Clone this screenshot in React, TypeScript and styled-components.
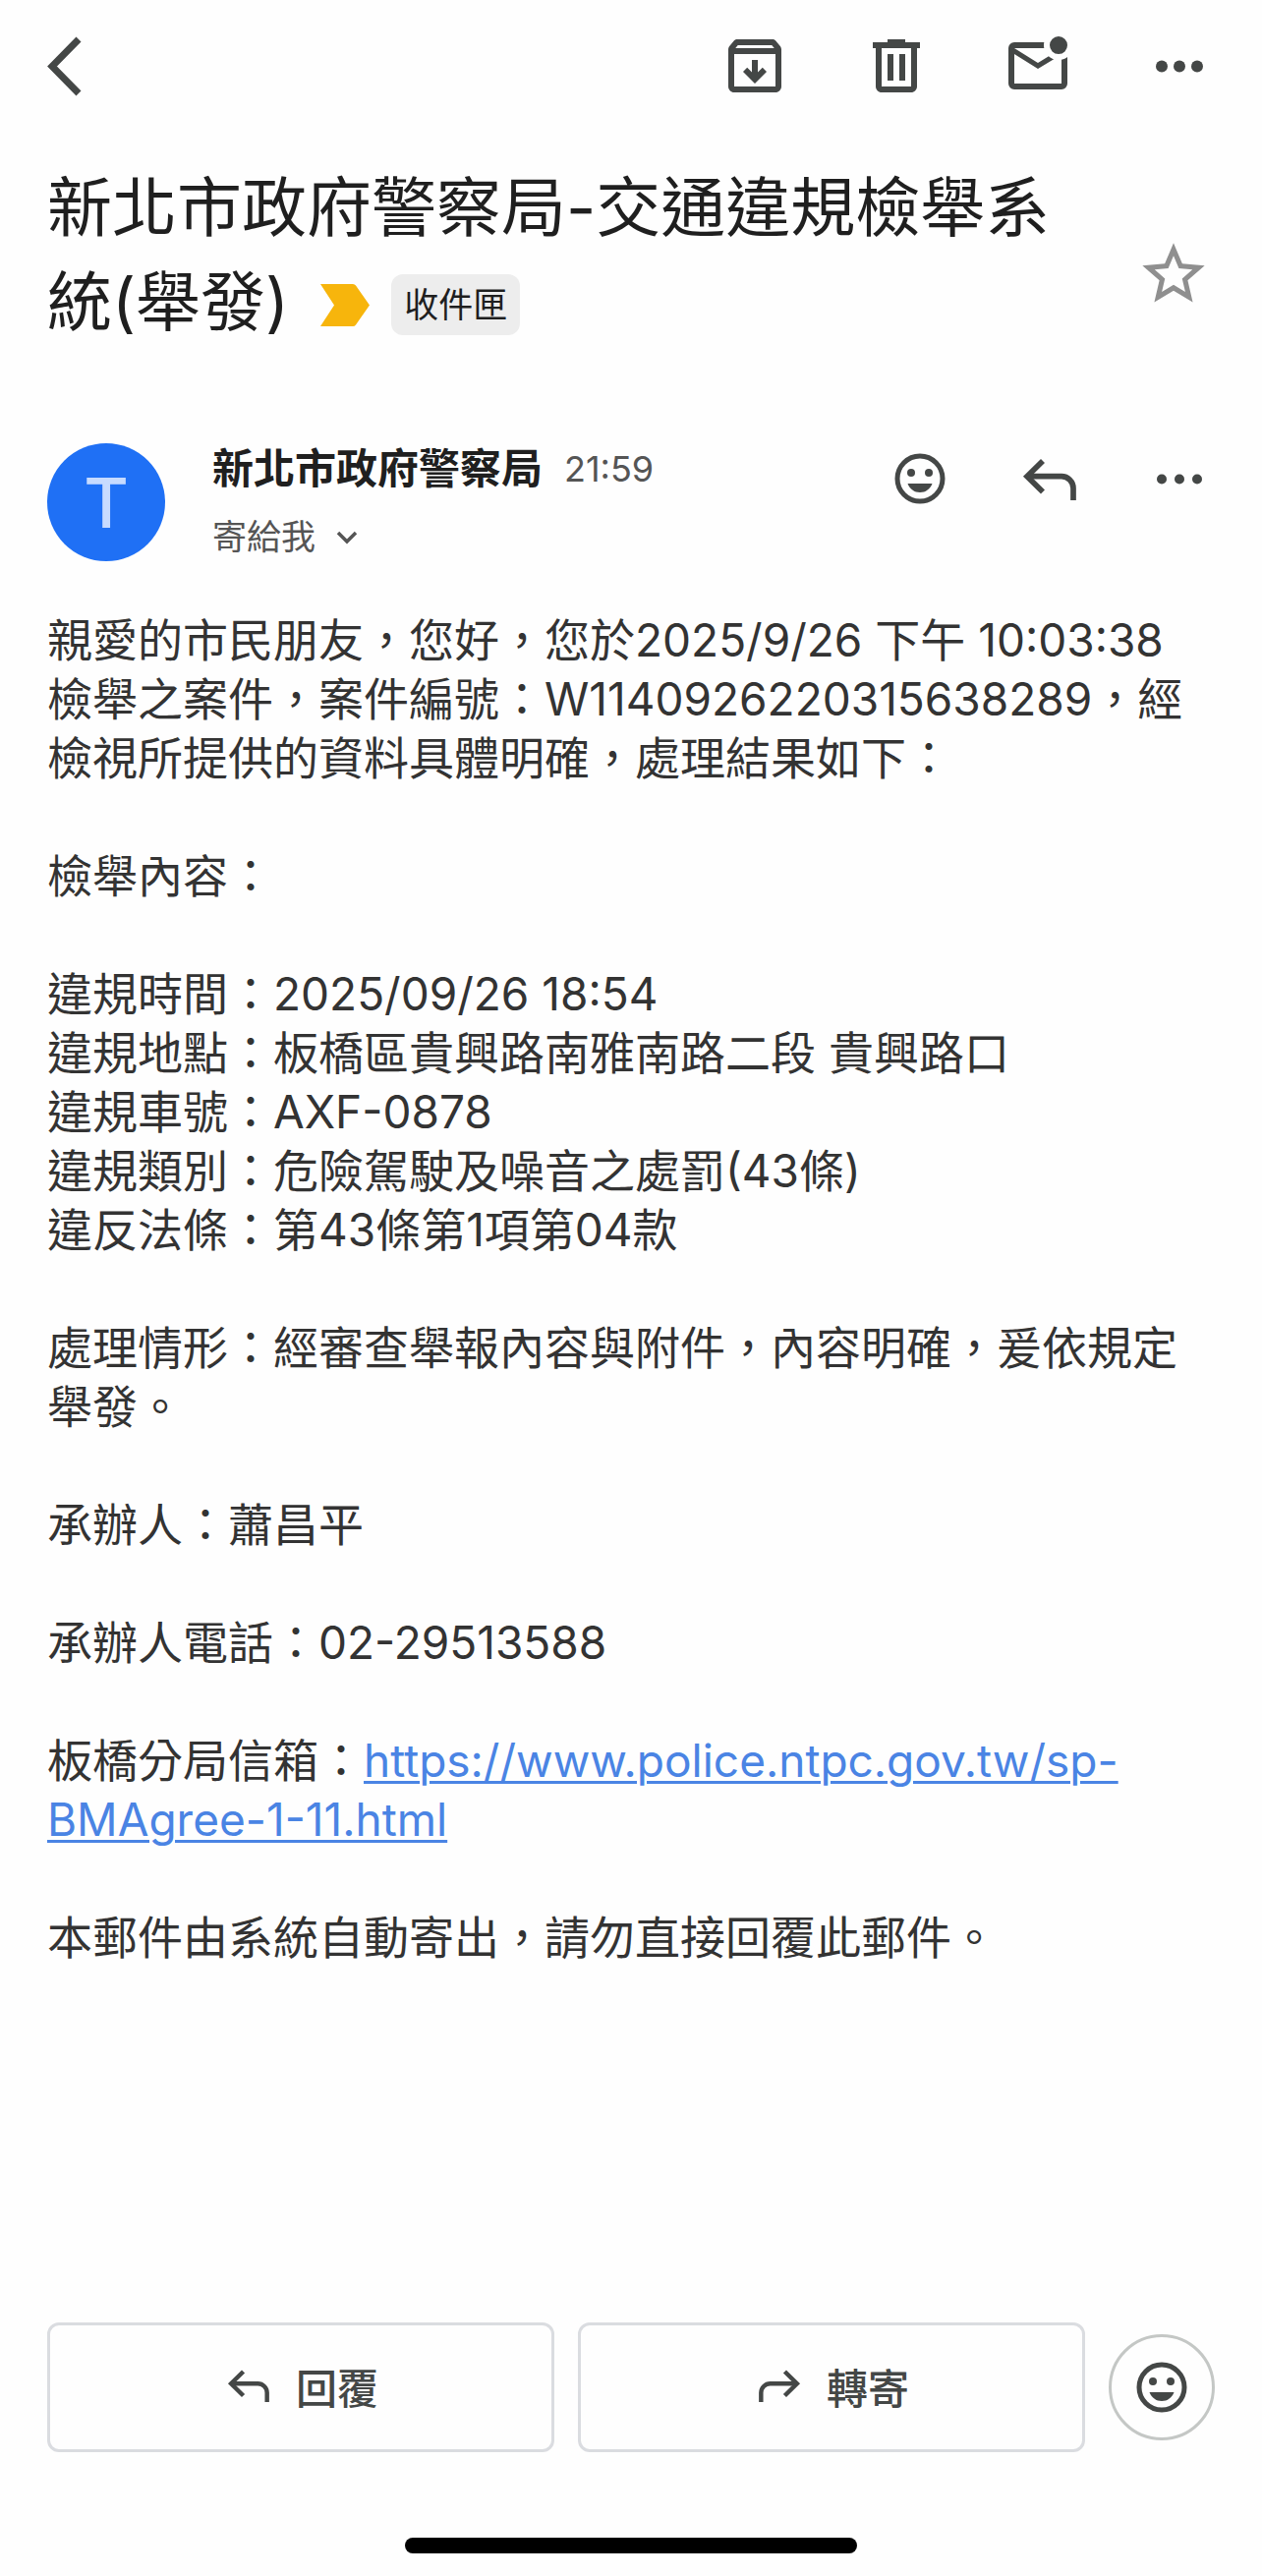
import React from "react";
import styled, { createGlobalStyle } from "styled-components";

const ink = "#444746";

const GlobalStyle = createGlobalStyle`
  *, *::before, *::after { box-sizing: border-box; }
  body {
    margin: 0;
    background: #fefefe;
    font-family: Inter, "Noto Sans CJK TC", sans-serif;
    color: #1f1f1f;
  }
  h1, h2, p { margin: 0; font-weight: 400; }
`;

const Screen = styled.div`
  display: flex;
  flex-direction: column;
  min-height: 100vh;
  padding: 31px 48px 23px;
`;

const Toolbar = styled.header`
  display: flex;
  align-items: center;
  gap: 72px;
`;

const IconButton = styled.button<{ $push?: boolean }>`
  display: flex;
  flex: none;
  padding: 0;
  border: 0;
  background: none;
  color: ${ink};
  margin-right: ${(p) => (p.$push ? "auto" : "0")};
`;

const SubjectRow = styled.div`
  display: flex;
  align-items: center;
  justify-content: space-between;
  gap: 48px;
  margin-top: 60px;
`;

const Subject = styled.h1`
  font-size: 66px;
  line-height: 96px;
`;

const Labels = styled.span`
  display: inline-flex;
  align-items: center;
  gap: 22px;
  height: 96px;
  padding-top: 6px;
  margin-left: 32px;
  vertical-align: top;
`;

const Badge = styled.span`
  padding: 0 13px;
  border-radius: 12px;
  background: #ededed;
  font-size: 35px;
  line-height: 62px;
`;

const StarButton = styled(IconButton)`
  padding: 40px 4px 0 0;
  color: #8f8f8f;
`;

const MessageHeader = styled.section`
  display: flex;
  align-items: flex-start;
  gap: 48px;
  margin-top: 96px;
`;

const Avatar = styled.div`
  display: flex;
  flex: none;
  align-items: center;
  justify-content: center;
  width: 120px;
  height: 120px;
  border-radius: 50%;
  background: #1f70f5;
  color: #c7dbff;
  font-size: 70px;
  font-weight: 500;
`;

const Sender = styled.div`
  flex: 1;
`;

const SenderLine = styled.div`
  display: flex;
  align-items: center;
  gap: 22px;
  line-height: 52px;
`;

const SenderName = styled.h2`
  font-size: 42px;
  font-weight: 700;
`;

const Time = styled.time`
  font-size: 36px;
  color: #555;
`;

const Recipient = styled.button`
  display: flex;
  align-items: center;
  gap: 20px;
  margin-top: 18px;
  padding: 0;
  border: 0;
  background: none;
  font: inherit;
  font-size: 35px;
  line-height: 50px;
  color: #555;
`;

const Actions = styled.div`
  display: flex;
  gap: 60px;
`;

const Body = styled.article`
  margin-top: 50px;
  font-size: 46px;
  line-height: 60px;
  color: #333;
`;

const Paragraph = styled.p`
  & + & { margin-top: 60px; }
`;

const MailLink = styled.a`
  color: #4a84e4;
  text-decoration: underline;
  text-decoration-thickness: 3px;
  text-underline-offset: 4px;
`;

const ReplyBar = styled.footer`
  display: flex;
  align-items: center;
  gap: 24px;
  margin-top: auto;
`;

const ReplyButton = styled.button`
  display: flex;
  flex: 1;
  align-items: center;
  justify-content: center;
  gap: 20px;
  height: 132px;
  padding: 0 2px 4px 0;
  border: 3px solid #dadce0;
  border-radius: 12px;
  background: none;
  font: inherit;
  font-size: 42px;
  font-weight: 500;
  color: ${ink};
`;

const ReactButton = styled(IconButton)`
  align-items: center;
  justify-content: center;
  width: 108px;
  height: 108px;
  border: 3px solid #c4c7c5;
  border-radius: 50%;
`;

const HomeIndicator = styled.div`
  align-self: center;
  width: 460px;
  max-width: 60%;
  height: 16px;
  margin-top: 87px;
  border-radius: 8px;
  background: #000;
`;

function Glyph({ d, size = 72 }: { d: string; size?: number }) {
  return (
    <svg width={size} height={size} viewBox="0 0 24 24" fill="currentColor" aria-hidden="true">
      <path fillRule="evenodd" d={d} />
    </svg>
  );
}

const paths = {
  archive:
    "M20.54 5.23l-1.39-1.68C18.88 3.21 18.47 3 18 3H6c-.47 0-.88.21-1.16.55L3.46 5.23C3.17 5.57 3 6.02 3 6.5V19c0 1.1.9 2 2 2h14c1.1 0 2-.9 2-2V6.5c0-.48-.17-.93-.46-1.27zM6.24 5h11.52l.83 1H5.42l.82-1zM5 19V8h14v11H5zM8 14l4 4 4-4-1.4-1.4-1.6 1.6V10h-2v4.2l-1.6-1.6z",
  trash:
    "M7 21c-1.1 0-2-.9-2-2V6H4V4h5V3h6v1h5v2h-1v13c0 1.100-.9 2-2 2zM17 6H7v13h10zM9 17h2V8H9zm4 0h2V8h-2z",
  unread:
    "M4 20q-.825 0-1.412-.587Q2 18.825 2 18V6q0-.825.588-1.412Q3.175 4 4 4h10.100q-.1.5-.1 1t.1 1H4l8 5 3.650-2.275q.375.35.813.612.437.263.912.438L12 13 4 8v10h16V9.900q.575-.125 1.075-.35.5-.225.925-.55v9q0 .825-.587 1.413Q20.825 20 20 20zM19 8q-1.250 0-2.125-.875T16 5t.875-2.125T19 2t2.125.875T22 5t-.875 2.125T19 8z",
  star: "M22 9.24l-7.190-.62L12 2 9.190 8.630 2 9.240l5.460 4.730L5.820 21 12 17.270 18.180 21l-1.630-7.030L22 9.240zM12 15.400l-3.760 2.270 1-4.280-3.320-2.880 4.380-.38L12 6.100l1.710 4.040 4.380.38-3.320 2.880 1 4.280L12 15.400z",
};

function BackIcon() {
  return (
    <svg width="36" height="72" viewBox="0 0 36 72" fill="none" stroke="currentColor" strokeWidth="7" aria-hidden="true">
      <path d="M32 9 5 36.500 32 64" />
    </svg>
  );
}

function DotsIcon({ r }: { r: number }) {
  return (
    <svg width="72" height="72" viewBox="0 0 72 72" fill="currentColor" aria-hidden="true">
      <circle cx="18" cy="36.500" r={r} />
      <circle cx="36" cy="36.500" r={r} />
      <circle cx="54" cy="36.500" r={r} />
    </svg>
  );
}

function SmileIcon() {
  return (
    <svg width="72" height="72" viewBox="0 0 72 72" fill="currentColor" aria-hidden="true">
      <circle cx="36" cy="36" r="23" fill="none" stroke="currentColor" strokeWidth="5" />
      <circle cx="27" cy="30" r="4" />
      <circle cx="45" cy="30" r="4" />
      <path d="M23.500 41h25c-2 5.600-6.800 9-12.500 9s-10.500-3.400-12.500-9z" />
    </svg>
  );
}

function ArrowIcon({ size = 72, forward = false }: { size?: number; forward?: boolean }) {
  return (
    <svg width={size} height={size} viewBox="0 0 72 72" fill="none" stroke="currentColor" strokeWidth="5.700" aria-hidden="true">
      <g transform={forward ? "matrix(-1 0 0 1 72 0)" : undefined}>
        <path d="M29 18 13 33.700 29 49.500" />
        <path d="M13 33.700H48a12 12 0 0 1 12 12V58" />
      </g>
    </svg>
  );
}

export default function App() {
  return (
    <>
      <GlobalStyle />
      <Screen lang="zh-Hant">
        <Toolbar>
          <IconButton aria-label="返回" $push>
            <BackIcon />
          </IconButton>
          <IconButton aria-label="封存">
            <Glyph d={paths.archive} />
          </IconButton>
          <IconButton aria-label="刪除">
            <Glyph d={paths.trash} />
          </IconButton>
          <IconButton aria-label="標示為未讀取">
            <Glyph d={paths.unread} />
          </IconButton>
          <IconButton aria-label="更多選項">
            <DotsIcon r={6} />
          </IconButton>
        </Toolbar>

        <SubjectRow>
          <Subject>
            新北市政府警察局-交通違規檢舉系統(舉發)
            <Labels>
              <svg width="50" height="43" viewBox="0 0 50 43" fill="#f7b50c" aria-hidden="true">
                <path d="M0 0h33q2 0 3 1.500L50 21.500 36 41.500Q35 43 33 43H0l14-21.500z" />
              </svg>
              <Badge>收件匣</Badge>
            </Labels>
          </Subject>
          <StarButton aria-label="加上星號">
            <Glyph d={paths.star} size={76} />
          </StarButton>
        </SubjectRow>

        <MessageHeader>
          <Avatar>T</Avatar>
          <Sender>
            <SenderLine>
              <SenderName>新北市政府警察局</SenderName>
              <Time>21:59</Time>
            </SenderLine>
            <Recipient>
              寄給我
              <svg width="24" height="16" viewBox="0 0 24 16" fill="none" stroke="currentColor" strokeWidth="3.500" aria-hidden="true">
                <path d="M3 4l9 9 9-9" />
              </svg>
            </Recipient>
          </Sender>
          <Actions>
            <IconButton aria-label="新增表情符號回應">
              <SmileIcon />
            </IconButton>
            <IconButton aria-label="回覆">
              <ArrowIcon />
            </IconButton>
            <IconButton aria-label="更多選項">
              <DotsIcon r={5} />
            </IconButton>
          </Actions>
        </MessageHeader>

        <Body>
          <Paragraph>
            親愛的市民朋友，您好，您於2025/9/26 下午 10:03:38
            <br />
            檢舉之案件，案件編號：W1140926220315638289，經檢視所提供的資料具體明確，處理結果如下：
          </Paragraph>
          <Paragraph>檢舉內容：</Paragraph>
          <Paragraph>
            違規時間：2025/09/26 18:54
            <br />
            違規地點：板橋區貴興路南雅南路二段 貴興路口
            <br />
            違規車號：AXF-0878
            <br />
            違規類別：危險駕駛及噪音之處罰(43條)
            <br />
            違反法條：第43條第1項第04款
          </Paragraph>
          <Paragraph>處理情形：經審查舉報內容與附件，內容明確，爰依規定舉發。</Paragraph>
          <Paragraph>承辦人：蕭昌平</Paragraph>
          <Paragraph>承辦人電話：02-29513588</Paragraph>
          <Paragraph>
            板橋分局信箱：
            <MailLink href="https://www.police.ntpc.gov.tw/sp-BMAgree-1-11.html">
              https://www.police.ntpc.gov.tw/sp-BMAgree-1-11.html
            </MailLink>
          </Paragraph>
          <Paragraph>本郵件由系統自動寄出，請勿直接回覆此郵件。</Paragraph>
        </Body>

        <ReplyBar>
          <ReplyButton>
            <ArrowIcon size={56} />
            回覆
          </ReplyButton>
          <ReplyButton>
            <ArrowIcon size={56} forward />
            轉寄
          </ReplyButton>
          <ReactButton aria-label="表情符號回應">
            <SmileIcon />
          </ReactButton>
        </ReplyBar>
        <HomeIndicator />
      </Screen>
    </>
  );
}
